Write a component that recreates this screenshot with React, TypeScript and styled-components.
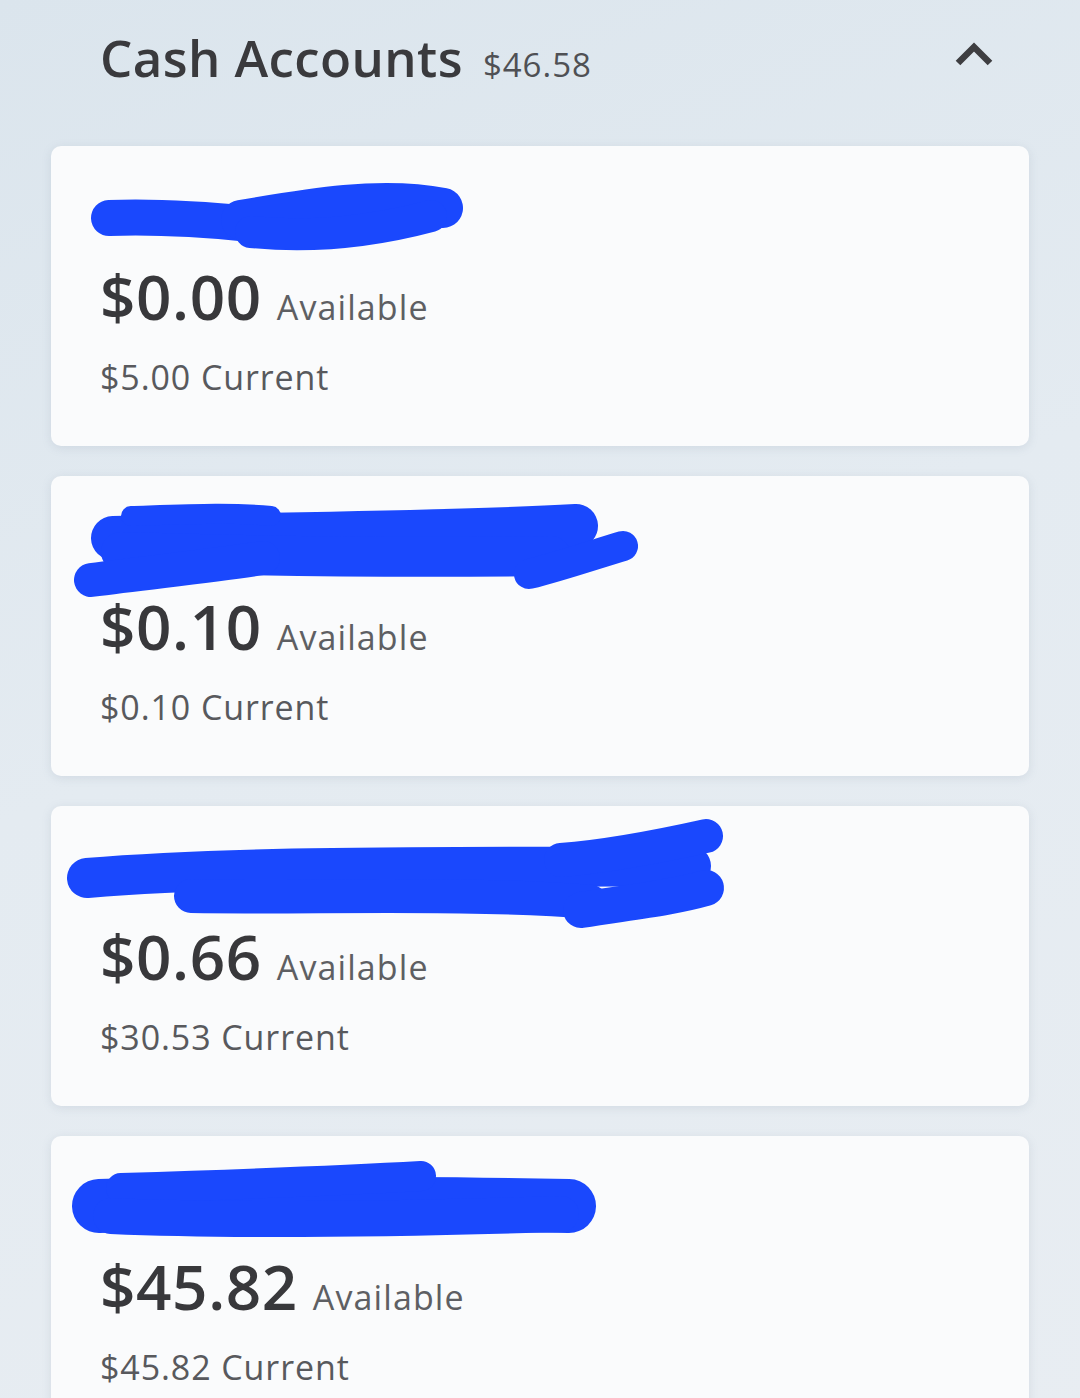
import React from 'react';
import styled, { createGlobalStyle } from 'styled-components';

const GlobalStyle = createGlobalStyle`
  html, body {
    margin: 0;
    padding: 0;
  }
  body {
    background: linear-gradient(160deg, #dbe5ed 0%, #e4ebf1 45%, #e8edf2 100%);
    font-family: 'Open Sans', 'Noto Sans', sans-serif;
    color: #3b3b3e;
    min-height: 1398px;
    overflow: hidden;
  }
`;

const Page = styled.div`
  padding: 0 51px;
`;

const Header = styled.div`
  height: 146px;
  display: flex;
  align-items: flex-start;
  justify-content: space-between;
  padding: 0 36px 0 49px;
  box-sizing: border-box;
`;

const TitleGroup = styled.div`
  display: flex;
  align-items: baseline;
  gap: 20px;
  padding-top: 25px;
`;

const Title = styled.h1`
  margin: 0;
  font-size: 51px;
  font-weight: 600;
  line-height: 64px;
  color: #3a3a3d;
  letter-spacing: 0.4px;
`;

const Total = styled.span`
  font-size: 33px;
  font-weight: 500;
  color: #4f5054;
  letter-spacing: 1px;
`;

const Chevron = styled.svg`
  margin-top: 42px;
  width: 38px;
  height: 24px;
`;

const List = styled.div`
  display: flex;
  flex-direction: column;
  gap: 30px;
`;

const Card = styled.div`
  position: relative;
  height: 300px;
  box-sizing: border-box;
  padding: 0 49px;
  background: #fafbfc;
  border-radius: 10px;
  box-shadow: 0 2px 10px rgba(120, 140, 160, 0.18);
`;

const NameRow = styled.div`
  height: 110px;
`;

const Scribble = styled.svg`
  position: absolute;
  left: 0;
  top: 0;
  width: 978px;
  height: 140px;
  pointer-events: none;
`;

const AmountRow = styled.div`
  display: flex;
  align-items: baseline;
  gap: 15px;
  line-height: 80px;
`;

const Amount = styled.span`
  font-size: 62px;
  font-weight: 600;
  color: #38383b;
  letter-spacing: 0.6px;
`;

const AmountLabel = styled.span`
  font-size: 34px;
  font-weight: 500;
  color: #5e5f63;
  letter-spacing: 1.1px;
`;

const Current = styled.div`
  margin-top: 8px;
  font-size: 34px;
  font-weight: 500;
  color: #58595d;
  line-height: 44px;
  letter-spacing: 0.9px;
`;

const BLUE = '#1a48fd';

type Stroke = { d: string; w: number };

type Account = {
  available: string;
  current: string;
  marks: Stroke[];
};

const accounts: Account[] = [
  {
    available: '$0.00',
    current: '$5.00',
    marks: [
      { d: 'M 58 72 C 110 70, 160 74, 200 78', w: 36 },
      { d: 'M 190 74 C 260 62, 330 50, 392 62', w: 40 },
      { d: 'M 200 86 C 260 92, 320 86, 380 70', w: 32 },
    ],
  },
  {
    available: '$0.10',
    current: '$0.10',
    marks: [
      { d: 'M 62 62 C 200 58, 380 58, 525 50', w: 44 },
      { d: 'M 70 76 C 200 80, 360 82, 500 80', w: 40 },
      { d: 'M 40 104 C 100 96, 160 90, 212 82', w: 34 },
      { d: 'M 478 98 C 510 90, 545 78, 572 70', w: 30 },
      { d: 'M 80 40 C 140 38, 180 36, 220 40', w: 20 },
    ],
  },
  {
    available: '$0.66',
    current: '$30.53',
    marks: [
      { d: 'M 36 72 C 200 58, 420 62, 640 60', w: 40 },
      { d: 'M 140 90 C 260 92, 420 86, 540 96', w: 34 },
      { d: 'M 510 54 C 560 50, 610 40, 655 30', w: 34 },
      { d: 'M 530 104 C 580 96, 620 92, 655 82', w: 36 },
    ],
  },
  {
    available: '$45.82',
    current: '$45.82',
    marks: [
      { d: 'M 48 70 C 200 66, 400 68, 518 70', w: 54 },
      { d: 'M 70 52 C 200 48, 300 44, 370 40', w: 30 },
      { d: 'M 60 80 C 200 86, 380 82, 510 78', w: 36 },
    ],
  },
];

const AccountCard: React.FC<{ account: Account }> = ({ account }) => (
  <Card>
    <NameRow />
    <Scribble viewBox="0 0 978 140">
      {account.marks.map((m, i) => (
        <path
          key={i}
          d={m.d}
          fill="none"
          stroke={BLUE}
          strokeWidth={m.w}
          strokeLinecap="round"
          strokeLinejoin="round"
        />
      ))}
    </Scribble>
    <AmountRow>
      <Amount>{account.available}</Amount>
      <AmountLabel>Available</AmountLabel>
    </AmountRow>
    <Current>{account.current} Current</Current>
  </Card>
);

const App: React.FC = () => (
  <>
    <GlobalStyle />
    <Page>
      <Header>
        <TitleGroup>
          <Title>Cash Accounts</Title>
          <Total>$46.58</Total>
        </TitleGroup>
        <Chevron viewBox="0 0 38 24">
          <polyline
            points="3,21 19,5 35,21"
            fill="none"
            stroke="#3e3e41"
            strokeWidth="6.5"
            strokeLinecap="butt"
            strokeLinejoin="miter"
          />
        </Chevron>
      </Header>
      <List>
        {accounts.map((a, i) => (
          <AccountCard key={i} account={a} />
        ))}
      </List>
    </Page>
  </>
);

export default App;
